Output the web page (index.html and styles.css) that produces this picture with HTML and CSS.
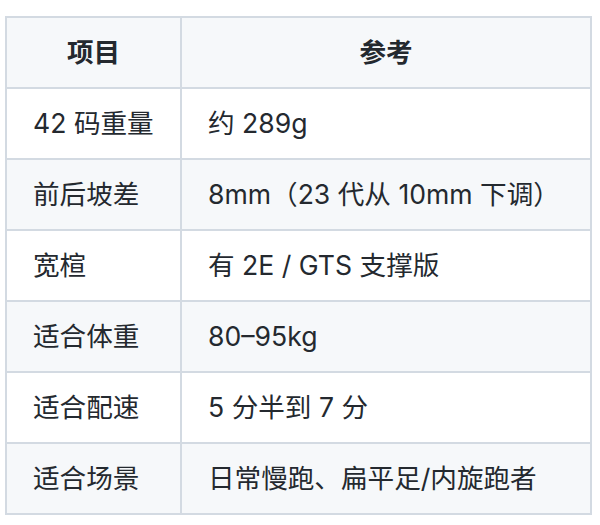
FILE: index.html
```html
<!DOCTYPE html>
<html lang="zh-CN">
<head>
<meta charset="utf-8">
<title>参数表</title>
<link rel="stylesheet" href="styles.css">
</head>
<body>
<table class="spec">
  <colgroup>
    <col class="c1">
    <col class="c2">
  </colgroup>
  <thead>
    <tr><th>项目</th><th>参考</th></tr>
  </thead>
  <tbody>
    <tr><td>42 码重量</td><td>约 289g</td></tr>
    <tr><td>前后坡差</td><td>8mm（23 代从 10mm 下调）</td></tr>
    <tr><td>宽楦</td><td>有 2E / GTS 支撑版</td></tr>
    <tr><td>适合体重</td><td>80–95kg</td></tr>
    <tr><td>适合配速</td><td>5 分半到 7 分</td></tr>
    <tr><td>适合场景</td><td>日常慢跑、扁平足/内旋跑者</td></tr>
  </tbody>
</table>
</body>
</html>
```

FILE: styles.css
```css
html, body {
  margin: 0;
  background: #ffffff;
}
body {
  padding: 16px 0 0 5px;
  font-family: "Inter", "Noto Sans CJK SC", sans-serif;
  color: #24292f;
}
.spec {
  border-collapse: separate;
  border-spacing: 0;
  table-layout: fixed;
  width: 587px;
  border-top: 2px solid #d3dae2;
  border-left: 2px solid #d3dae2;
}
.c1 { width: 175px; }
.spec th,
.spec td {
  border-right: 2px solid #d3dae2;
  border-bottom: 2px solid #d3dae2;
  padding: 12px 0 12px 26px;
  height: 45px;
  line-height: 45px;
  font-size: 26.6px;
  white-space: nowrap;
  box-sizing: content-box;
}
.spec td {
  font-weight: 400;
  text-align: left;
}
.spec th {
  font-weight: 700;
  text-align: center;
  padding-right: 26px;
  background: #f6f8fa;
}
.spec tbody tr:nth-child(even) td {
  background: #f6f8fa;
}
```
